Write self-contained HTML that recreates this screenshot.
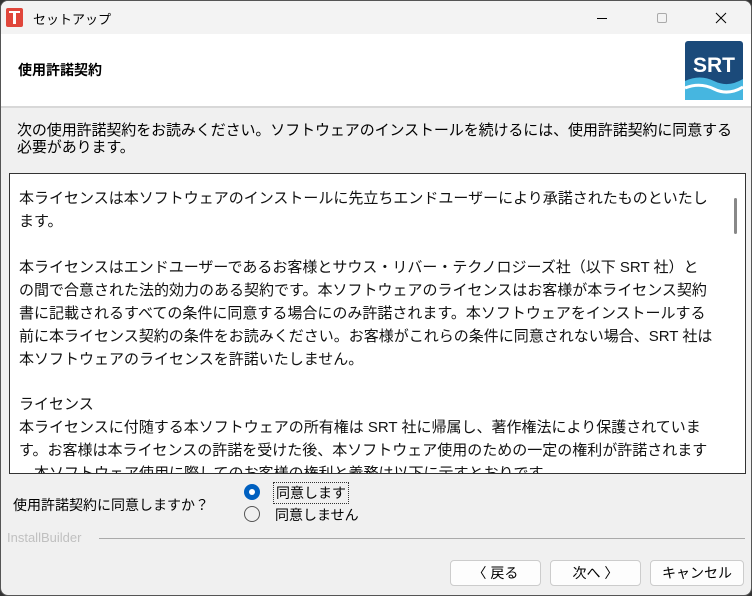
<!DOCTYPE html><html><head><meta charset="utf-8"><style>
*{margin:0;padding:0;box-sizing:border-box}
body{width:752px;height:596px;background:#333;font-family:"Liberation Sans","Noto Sans CJK JP",sans-serif;overflow:hidden}
.win{position:absolute;left:0;top:0;width:752px;height:596px;background:#f0f0f0;border:1px solid #555;border-radius:8px;overflow:hidden}
.title{position:absolute;left:0;top:0;width:100%;height:33px;background:#f3f3f3;font-size:13px;color:#000}
.hdr{position:absolute;left:0;top:33px;width:100%;height:74px;background:#fff;border-bottom:2px solid #d8d8d8}
.t{position:absolute;white-space:nowrap}
.box{position:absolute;left:8px;top:172px;width:737px;height:301px;background:#fff;border:1px solid #333;overflow:hidden}
.box p{position:absolute;left:9px;font-size:15px;line-height:23px;white-space:nowrap;color:#111}
.btn{position:absolute;top:559px;height:26px;background:#fdfdfd;border:1px solid #ccc;border-radius:4px;font-size:14px;text-align:center;line-height:24px}
</style></head><body><div class="win">
<div class="title">
<div style="position:absolute;left:5px;top:7px;width:17px;height:19px;background:#e0463b;border-radius:2px"><div style="position:absolute;left:3px;top:3px;width:11px;height:2px;background:#fff"></div><div style="position:absolute;left:7px;top:5px;width:3px;height:11px;background:#fff"></div></div>
<div class="t" style="left:32px;top:8px">セットアップ</div>
<div style="position:absolute;left:596px;top:17px;width:10px;height:1px;background:#000"></div>
<div style="position:absolute;left:656px;top:12px;width:10px;height:10px;border:1px solid #aaa;border-radius:2px"></div>
<svg style="position:absolute;left:714px;top:11px" width="12" height="12"><path d="M1 1L11 11M11 1L1 11" stroke="#000" stroke-width="1"/></svg>
</div>
<div class="hdr">
<div class="t" style="left:17px;top:26px;font-size:14px;font-weight:bold">使用許諾契約</div>
<svg style="position:absolute;left:684px;top:7px" width="58" height="59" viewBox="0 0 58 59"><rect width="58" height="59" rx="3" fill="#1b4a7a"/><text x="29" y="31" font-family="Liberation Sans" font-weight="bold" font-size="21" fill="#fff" text-anchor="middle">SRT</text><path d="M0 40 Q15 33 29 40 T58 38 V59 H0Z" fill="#46b6e0"/><path d="M0 47 Q15 41 29 48 T58 46" stroke="#fff" stroke-width="3" fill="none"/></svg>
</div>
<div class="t" style="left:16px;top:121px;font-size:15px;line-height:17px;letter-spacing:-0.1px">次の使用許諾契約をお読みください。ソフトウェアのインストールを続けるには、使用許諾契約に同意する<br>必要があります。</div>
<div class="box">
<p style="top:13px">本ライセンスは本ソフトウェアのインストールに先立ちエンドユーザーにより承諾されたものといたし<br>ます。</p>
<p style="top:82px">本ライセンスはエンドユーザーであるお客様とサウス・リバー・テクノロジーズ社（以下 SRT 社）と<br>の間で合意された法的効力のある契約です。本ソフトウェアのライセンスはお客様が本ライセンス契約<br>書に記載されるすべての条件に同意する場合にのみ許諾されます。本ソフトウェアをインストールする<br>前に本ライセンス契約の条件をお読みください。お客様がこれらの条件に同意されない場合、SRT 社は<br>本ソフトウェアのライセンスを許諾いたしません。</p>
<p style="top:219px">ライセンス<br>本ライセンスに付随する本ソフトウェアの所有権は SRT 社に帰属し、著作権法により保護されていま<br>す。お客様は本ライセンスの許諾を受けた後、本ソフトウェア使用のための一定の権利が許諾されます<br>。本ソフトウェア使用に際してのお客様の権利と義務は以下に示すとおりです。</p>
<div style="position:absolute;left:724px;top:24px;width:3px;height:36px;background:#888;border-radius:2px"></div>
</div>
<div class="t" style="left:12px;top:494px;font-size:14px">使用許諾契約に同意しますか？</div>
<div style="position:absolute;left:243px;top:483px;width:16px;height:16px;border-radius:50%;background:#0060c0"><div style="position:absolute;left:5px;top:5px;width:6px;height:6px;border-radius:50%;background:#fff"></div></div>
<div class="t" style="left:272px;top:481px;font-size:14px;border:1px dotted #333;padding:0 2px">同意します</div>
<div style="position:absolute;left:243px;top:505px;width:16px;height:16px;border-radius:50%;border:1px solid #555"></div>
<div class="t" style="left:274px;top:504px;font-size:14px">同意しません</div>
<div class="t" style="left:6px;top:529px;font-size:13px;color:#c0c0c0">InstallBuilder</div>
<div style="position:absolute;left:98px;top:537px;width:646px;height:1px;background:#aaa"></div>
<div class="btn" style="left:449px;width:91px">〈 戻る</div>
<div class="btn" style="left:549px;width:91px">次へ 〉</div>
<div class="btn" style="left:649px;width:94px">キャンセル</div>
</div></body></html>
